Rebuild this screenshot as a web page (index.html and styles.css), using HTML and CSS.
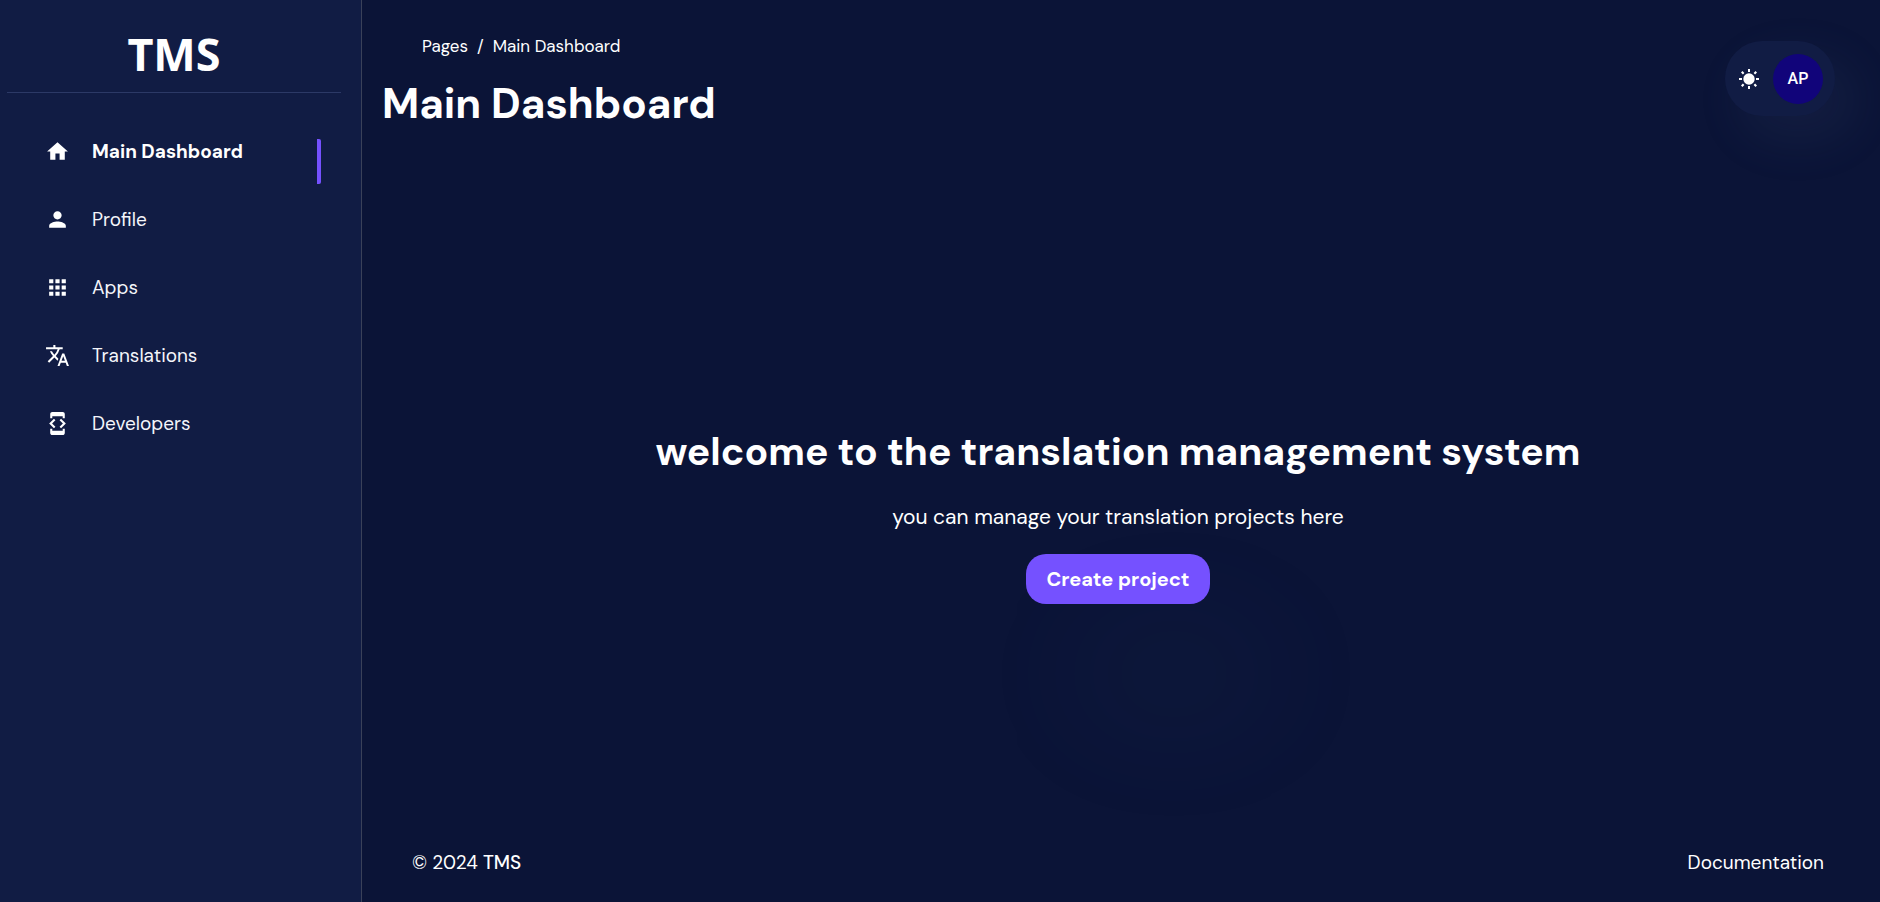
FILE: index.html
```
<!DOCTYPE html>
<html lang="en">
<head>
<meta charset="utf-8">
<meta name="viewport" content="width=device-width, initial-scale=1">
<title>Main Dashboard</title>
<link rel="stylesheet" href="styles.css">
</head>
<body>
<div class="app">
  <aside class="sidebar">
    <div class="brand">TMS</div>
    <nav class="nav" aria-label="Main">
      <a class="nav-link active" href="#">
        <svg class="icon" viewBox="0 0 24 24"><path d="M10 20v-6h4v6h5v-8h3L12 3 2 12h3v8z"/></svg>
        <span>Main Dashboard</span>
      </a>
      <a class="nav-link" href="#">
        <svg class="icon" viewBox="0 0 24 24"><path d="M12 12c2.210 0 4-1.790 4-4s-1.790-4-4-4-4 1.790-4 4 1.790 4 4 4zm0 2c-2.670 0-8 1.340-8 4v2h16v-2c0-2.660-5.330-4-8-4z"/></svg>
        <span>Profile</span>
      </a>
      <a class="nav-link" href="#">
        <svg class="icon" viewBox="0 0 24 24"><path d="M4 8h4V4H4v4zm6 12h4v-4h-4v4zm-6 0h4v-4H4v4zm0-6h4v-4H4v4zm6 0h4v-4h-4v4zm6-10v4h4V4h-4zm-6 4h4V4h-4v4zm6 6h4v-4h-4v4zm0 6h4v-4h-4v4z"/></svg>
        <span>Apps</span>
      </a>
      <a class="nav-link" href="#">
        <svg class="icon" viewBox="0 0 24 24"><path d="M12.870 15.070l-2.540-2.510.03-.03A17.520 17.520 0 0014.070 6H17V4h-7V2H8v2H1v1.990h11.170C11.500 7.920 10.440 9.750 9 11.350 8.070 10.320 7.300 9.190 6.690 8h-2c.73 1.630 1.730 3.170 2.980 4.560l-5.090 5.020L4 19l5-5 3.110 3.110.76-2.040zM18.500 10h-2L12 22h2l1.120-3h4.750L21 22h2l-4.500-12zm-2.620 7l1.620-4.330L19.120 17h-3.240z"/></svg>
        <span>Translations</span>
      </a>
      <a class="nav-link" href="#">
        <svg class="icon" viewBox="0 0 24 24"><path d="M7 5h10v2h2V3c0-1.100-.9-1.990-2-1.990L7 1c-1.100 0-2 .9-2 2v4h2V5zm8.410 11.590L20 12l-4.590-4.590L14 8.830 17.170 12 14 15.170l1.410 1.420zM10 15.170L6.830 12 10 8.830 8.590 7.410 4 12l4.590 4.590L10 15.170zM17 19H7v-2H5v4c0 1.100.9 2 2 2h10c1.100 0 2-.9 2-2v-4h-2v2z"/></svg>
        <span>Developers</span>
      </a>
    </nav>
  </aside>
  <div class="page">
    <header class="header">
      <div>
        <nav class="crumbs" aria-label="Breadcrumb"><a href="#">Pages</a><span>/</span><a href="#">Main Dashboard</a></nav>
        <h1 class="title">Main Dashboard</h1>
      </div>
      <div class="tools">
        <button class="theme" type="button" aria-label="Switch theme">
          <svg viewBox="0 0 22 22">
            <circle cx="11" cy="11" r="5.700"/>
            <path d="M10 1h2v3h-2zM10 18h2v3h-2zM1 10h3v2H1zM18 10h3v2h-3zM4.500 3l1.900 1.900-1.500 1.500L3 4.500zM17.500 3L19 4.500l-1.900 1.900-1.500-1.500zM4.500 19L3 17.500l1.900-1.900 1.500 1.500zM17.500 19l-1.900-1.900 1.500-1.500 1.900 1.900z"/>
          </svg>
        </button>
        <button class="avatar" type="button">AP</button>
      </div>
    </header>
    <main class="welcome">
      <h2>welcome to the translation management system</h2>
      <p>you can manage your translation projects here</p>
      <button class="create" type="button">Create project</button>
    </main>
    <footer class="footer">
      <p>© 2024 <strong>TMS</strong></p>
      <a href="#">Documentation</a>
    </footer>
  </div>
</div>
</body>
</html>
```
FILE: styles.css
```
* { box-sizing: border-box; }

body {
  margin: 0;
  background: #0b1437;
  color: #fff;
  font-family: "DM Sans", Lato, sans-serif;
  font-size: 19px;
  line-height: 28px;
}

a { color: inherit; text-decoration: none; }
h1, h2, p { margin: 0; }
button { border: 0; color: inherit; font-family: inherit; cursor: pointer; }

.app { display: flex; min-height: 100vh; }

.sidebar {
  flex: 0 0 362px;
  background: #111c44;
  border-right: 1px solid #3a4159;
}

.brand {
  margin: 0 20px 0 7px;
  padding: 24px 0 8px;
  border-bottom: 1px solid #2c3966;
  font: 700 45px/60px "Noto Sans", "Open Sans", sans-serif;
  text-align: center;
}

.nav {
  display: flex;
  flex-direction: column;
  gap: 23px;
  padding: 46px 40px 0 45px;
}

.nav-link {
  display: flex;
  align-items: flex-start;
  gap: 22px;
  height: 45px;
  border-radius: 2px;
}

.nav-link span { color: #f4f5fa; line-height: 25px; }
.nav-link.active span { color: #fff; font-weight: 700; }

.nav-link.active {
  background: linear-gradient(#7551ff, #7551ff) right / 4px 100% no-repeat;
}

.icon { width: 25px; height: 25px; fill: #fff; }

.page {
  flex: 1;
  display: flex;
  flex-direction: column;
  min-width: 0;
}

.header {
  display: flex;
  justify-content: space-between;
  padding: 32px 45px 0 20px;
}

.crumbs {
  display: flex;
  gap: 9px;
  padding-left: 40px;
  font-size: 17px;
}

.title { margin-top: 16px; font-size: 42px; line-height: 56px; }

.tools {
  display: flex;
  align-items: center;
  gap: 13px;
  height: 75px;
  margin-top: 9px;
  padding: 0 12px 0 13px;
  border-radius: 38px;
  background: #111c44;
  box-shadow: 18px 21px 50px 5px rgba(112, 144, 176, 0.08);
}

.theme {
  display: flex;
  width: 22px;
  height: 22px;
  padding: 0;
  border-radius: 20px;
  background: transparent;
  box-shadow: 56px 95px 141px 9px rgba(112, 144, 176, 0.08);
}

.theme svg { width: 22px; height: 22px; fill: #fff; }

.avatar {
  width: 50px;
  height: 50px;
  padding: 0;
  border-radius: 50%;
  background: #11047a;
  font: 500 16px/20px Roboto, sans-serif;
}

.welcome {
  flex: 1;
  display: flex;
  flex-direction: column;
  align-items: center;
  justify-content: center;
  padding: 49px 6px 0 0;
  text-align: center;
}

.welcome h2 { font-size: 39px; line-height: 50px; }
.welcome p { margin: 24px 0 21px; font-size: 21px; line-height: 32px; }

.create {
  height: 50px;
  padding: 0 20px;
  border-radius: 20px;
  background: #7551ff;
  box-shadow: 56px 95px 141px 9px rgba(112, 144, 176, 0.08);
  font-size: 20px;
  font-weight: 700;
}

.footer {
  display: flex;
  justify-content: space-between;
  padding: 0 56px 25px 50px;
}

.footer strong { font-weight: 500; }
```
